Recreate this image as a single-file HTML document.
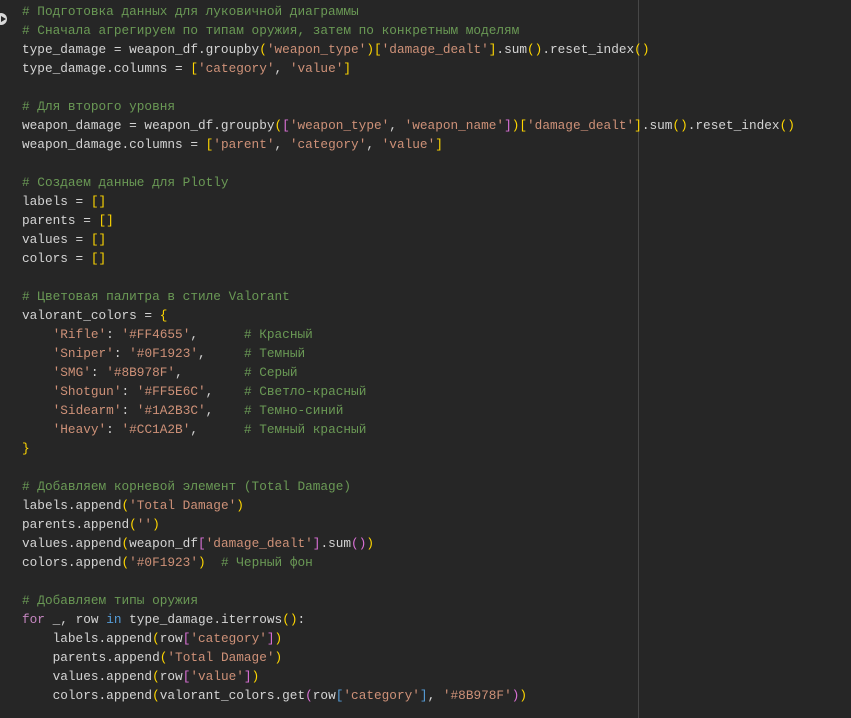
<!DOCTYPE html>
<html><head><meta charset="utf-8"><style>
html,body{margin:0;padding:0;background:#262626;width:851px;height:718px;overflow:hidden}
.ruler{position:absolute;left:638px;top:0;width:1px;height:718px;background:#474747}
pre{position:absolute;left:22px;top:2px;margin:0;font-family:"Liberation Mono","DejaVu Sans Mono",monospace;font-size:12.75px;line-height:19px;color:#d4d4d4;white-space:pre}
.c{color:#6a9955}.s{color:#ce9178}.y{color:#ffd700}.p{color:#da70d6}.k{color:#c586c0}.b{color:#569cd6}
.icon{position:absolute;left:-5px;top:13px;width:12px;height:12px;border-radius:50%;background:#d8d8d8}
.icon:after{content:"";position:absolute;left:6px;top:3px;border-left:5px solid #262626;border-top:3px solid transparent;border-bottom:3px solid transparent}
</style></head><body>
<div class="ruler"></div>
<div class="icon"></div>
<pre><span class="c"># Подготовка данных для луковичной диаграммы</span>
<span class="c"># Сначала агрегируем по типам оружия, затем по конкретным моделям</span>
type_damage = weapon_df.groupby<span class="y">(</span><span class="s">'weapon_type'</span><span class="y">)[</span><span class="s">'damage_dealt'</span><span class="y">]</span>.sum<span class="y">()</span>.reset_index<span class="y">()</span>
type_damage.columns = <span class="y">[</span><span class="s">'category'</span>, <span class="s">'value'</span><span class="y">]</span>

<span class="c"># Для второго уровня</span>
weapon_damage = weapon_df.groupby<span class="y">(</span><span class="p">[</span><span class="s">'weapon_type'</span>, <span class="s">'weapon_name'</span><span class="p">]</span><span class="y">)[</span><span class="s">'damage_dealt'</span><span class="y">]</span>.sum<span class="y">()</span>.reset_index<span class="y">()</span>
weapon_damage.columns = <span class="y">[</span><span class="s">'parent'</span>, <span class="s">'category'</span>, <span class="s">'value'</span><span class="y">]</span>

<span class="c"># Создаем данные для Plotly</span>
labels = <span class="y">[]</span>
parents = <span class="y">[]</span>
values = <span class="y">[]</span>
colors = <span class="y">[]</span>

<span class="c"># Цветовая палитра в стиле Valorant</span>
valorant_colors = <span class="y">{</span>
    <span class="s">'Rifle'</span>: <span class="s">'#FF4655'</span>,      <span class="c"># Красный</span>
    <span class="s">'Sniper'</span>: <span class="s">'#0F1923'</span>,     <span class="c"># Темный</span>
    <span class="s">'SMG'</span>: <span class="s">'#8B978F'</span>,        <span class="c"># Серый</span>
    <span class="s">'Shotgun'</span>: <span class="s">'#FF5E6C'</span>,    <span class="c"># Светло-красный</span>
    <span class="s">'Sidearm'</span>: <span class="s">'#1A2B3C'</span>,    <span class="c"># Темно-синий</span>
    <span class="s">'Heavy'</span>: <span class="s">'#CC1A2B'</span>,      <span class="c"># Темный красный</span>
<span class="y">}</span>

<span class="c"># Добавляем корневой элемент (Total Damage)</span>
labels.append<span class="y">(</span><span class="s">'Total Damage'</span><span class="y">)</span>
parents.append<span class="y">(</span><span class="s">''</span><span class="y">)</span>
values.append<span class="y">(</span>weapon_df<span class="p">[</span><span class="s">'damage_dealt'</span><span class="p">]</span>.sum<span class="p">()</span><span class="y">)</span>
colors.append<span class="y">(</span><span class="s">'#0F1923'</span><span class="y">)</span>  <span class="c"># Черный фон</span>

<span class="c"># Добавляем типы оружия</span>
<span class="k">for</span> _, row <span class="b">in</span> type_damage.iterrows<span class="y">()</span>:
    labels.append<span class="y">(</span>row<span class="p">[</span><span class="s">'category'</span><span class="p">]</span><span class="y">)</span>
    parents.append<span class="y">(</span><span class="s">'Total Damage'</span><span class="y">)</span>
    values.append<span class="y">(</span>row<span class="p">[</span><span class="s">'value'</span><span class="p">]</span><span class="y">)</span>
    colors.append<span class="y">(</span>valorant_colors.get<span class="p">(</span>row<span class="b">[</span><span class="s">'category'</span><span class="b">]</span>, <span class="s">'#8B978F'</span><span class="p">)</span><span class="y">)</span></pre>
</body></html>
